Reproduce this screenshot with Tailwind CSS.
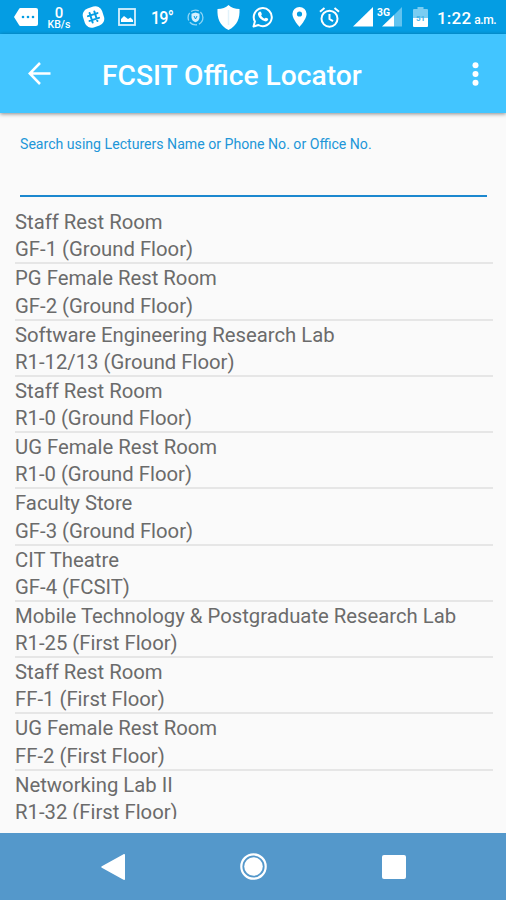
<!DOCTYPE html>
<html lang="en">
<head>
    <meta charset="UTF-8">
    <title>FCSIT Office Locator</title>
    <meta name="viewport" content="width=device-width, initial-scale=1.0">
    <script src="https://cdn.jsdelivr.net/npm/@tailwindcss/browser@4"></script>
</head>
<body class="h-[900px] w-[506px] overflow-hidden flex flex-col bg-[#fafafa] font-[Roboto,sans-serif]">

<!-- Status bar -->
<div class="h-[34px] shrink-0 bg-[#049de3] flex items-center pl-[14px] text-white">
    <!-- Message tag -->
    <svg class="w-6 h-[18px] shrink-0" viewBox="0 0 24 18" fill="currentColor">
        <path d="M7 0h15a2 2 0 0 1 2 2v14a2 2 0 0 1-2 2H7c-1 0-1.600-.4-2-1L0 9l5-8c.4-.6 1-1 2-1z"/>
        <g fill="#049de3"><circle cx="9" cy="9" r="1.300"/><circle cx="14" cy="9" r="1.300"/><circle cx="19" cy="9" r="1.300"/></g>
    </svg>
    <div class="ml-[8px] mt-[2px] w-[26px] shrink-0 flex flex-col items-center font-medium">
        <span class="text-[15px] leading-[13px]">0</span>
        <span class="text-[10.500px] leading-[10px]">KB/s</span>
    </div>
    <!-- Slack -->
    <svg class="ml-[10px] w-[23px] h-[22px] shrink-0" viewBox="0 0 23 22">
        <rect x="1.500" y="1" width="20" height="20" rx="7" fill="#fff" transform="rotate(-18 11.500 11)"/>
        <g stroke="#049de3" stroke-width="2" stroke-linecap="round" transform="rotate(-18 11.500 11)">
            <path d="M9 6v10M14 6v10M6.500 8.500h10M6.500 13.500h10"/>
        </g>
    </svg>
    <!-- Picture -->
    <svg class="ml-[13px] w-[18px] h-[18px] shrink-0" viewBox="0 0 18 18">
        <rect x="1" y="1" width="16" height="16" fill="none" stroke="#d5f0fd" stroke-width="1.800"/>
        <path d="M3 14v-3l3-3 4 3 2.500-1.500L15 12v2z" fill="#fff"/>
    </svg>
    <span class="ml-[15px] mt-px w-[22px] shrink-0 text-[19px] leading-5 font-medium tracking-[-1px] origin-left scale-x-[0.85]">19°</span>
    <!-- Small round shield -->
    <svg class="ml-[14px] mt-px w-[17px] h-[17px] shrink-0" viewBox="0 0 17 17" fill="none">
        <circle cx="8.500" cy="8.500" r="7.400" stroke="#8fd5f5" stroke-width="1.300" stroke-dasharray="8 2"/>
        <path d="M8.500 3.500l4 1.300v3.500c0 2.500-1.700 4.200-4 5-2.300-.8-4-2.500-4-5V4.800z" fill="#d5f0fd"/>
        <path d="M7 7l1.500 3L10 7" stroke="#049de3"/>
    </svg>
    <!-- Shield -->
    <svg class="ml-[13px] w-[23px] h-[25px] shrink-0" viewBox="0 0 23 25">
        <path d="M11.500 0C14 2.500 18 4 22.500 4c.5 9-2 16.500-11 21C2.500 20.500 0 13 .5 4 5 4 9 2.500 11.500 0z" fill="#fff"/>
        <path d="M11.500 5v15" stroke="#e2f2fa" stroke-width="1.500"/>
    </svg>
    <!-- WhatsApp -->
    <svg class="ml-[12px] w-[22px] h-[22px] shrink-0" viewBox="0 0 22 22" fill="none">
        <path d="M1.500 20.500l1.400-5A9 9 0 1 1 6.400 19z" stroke="#fff" stroke-width="2" stroke-linejoin="round"/>
        <path d="M7.500 5.800c.5-.4 1.200-.3 1.500.3l.8 1.800c.2.500-.8 1.300-.6 1.700.7 1.300 1.700 2.300 3.100 2.900.5.200 1.100-1.100 1.700-.8l1.800.9c.5.300.5.900.2 1.400-.6 1.100-1.700 1.600-3 1.300-3.600-.9-6.100-3.400-7-6.500-.3-1.200.4-2.300 1.500-3z" fill="#fff"/>
    </svg>
    <!-- Location pin -->
    <svg class="ml-[18px] w-[15px] h-5 shrink-0" viewBox="0 0 15 20">
        <path fill="#fff" fill-rule="evenodd" d="M7.500 0A7.100 7.100 0 0 0 .4 7.100C.4 12.300 7.500 20 7.500 20s7.100-7.700 7.100-12.900A7.100 7.100 0 0 0 7.500 0zm0 9.600a2.600 2.600 0 1 1 0-5.200 2.600 2.600 0 0 1 0 5.200z"/>
    </svg>
    <!-- Alarm -->
    <svg class="ml-[12px] w-[21px] h-[21px] shrink-0" viewBox="0 0 21 21" fill="none" stroke="#fff" stroke-width="2">
        <circle cx="10.500" cy="11.700" r="8"/>
        <path d="M10.500 7v5l3.500 2.200M1 4.700L5.500 1M20 4.700L15.500 1"/>
    </svg>
    <!-- Signal strength -->
    <svg class="ml-[13px] w-[50px] h-5 shrink-0" viewBox="0 0 50 20">
        <path d="M0 19.500L20 0v19.500z" fill="#fff"/>
        <path d="M41 8l8-8v19.500h-8z" fill="#62c3ef"/>
        <path d="M29 19.500L41 8v11.500z" fill="#fff"/>
        <text x="24" y="8.500" font-size="10" font-weight="700" fill="#fff" textLength="13" lengthAdjust="spacingAndGlyphs">3G</text>
    </svg>
    <!-- Battery -->
    <svg class="ml-[10px] w-[15px] h-5 shrink-0" viewBox="0 0 15 20">
        <path d="M4.500 0h6v2H14a1 1 0 0 1 1 1v8H0V3a1 1 0 0 1 1-1h3.500z" fill="#7acdf2"/>
        <path d="M0 11h15v8a1 1 0 0 1-1 1H1a1 1 0 0 1-1-1z" fill="#fff"/>
        <text x="3" y="13.500" font-size="8" font-weight="700" fill="#3fb1e6">51</text>
    </svg>
    <div class="ml-[9px] mt-[2px] flex items-baseline whitespace-nowrap font-medium">
        <span class="text-[17px] leading-5 tracking-[0.2px]">1:22</span>
        <span class="ml-[3px] text-[12px] tracking-[-0.4px]">a.m.</span>
    </div>
</div>

<!-- App bar -->
<div class="relative z-10 h-[79px] shrink-0 bg-[#42c5ff] shadow-[0_1px_4px_rgba(0,0,0,0.45)] flex items-center pl-[28px] pr-[27px] text-white">
    <svg class="w-[23px] h-[23px] shrink-0" viewBox="0 0 23 23" fill="none" stroke="currentColor" stroke-width="2.500">
        <path d="M22.500 11.500H2M12 1L1.700 11.500 12 22"/>
    </svg>
    <h1 class="ml-[51px] mt-[4px] text-[28.200px] leading-8 font-medium whitespace-nowrap">FCSIT Office Locator</h1>
    <svg class="ml-auto w-[7px] h-6 shrink-0" viewBox="0 0 7 24" fill="currentColor">
        <circle cx="3.500" cy="3.200" r="3"/><circle cx="3.500" cy="12" r="3"/><circle cx="3.500" cy="20.800" r="3"/>
    </svg>
</div>

<!-- Search field -->
<div class="h-[84px] shrink-0 mx-5 pt-[22px] w-[467px] border-b-2 border-[#1c88cf]">
    <label class="block text-[14.120px] leading-[18px] text-[#2196d8] whitespace-nowrap">Search using Lecturers Name or Phone No. or Office No.</label>
</div>

<!-- Office list -->
<div id="officeList" class="h-[611px] shrink-0 mt-[11px] ml-[15px] w-[478px] overflow-hidden text-[20.300px] leading-[27.300px] text-[#6b6b6b]"></div>
<div class="h-[14px] shrink-0"></div>

<!-- Navigation bar -->
<div class="h-[67px] shrink-0 bg-[#5498cb] flex items-center pl-[101px] text-white">
    <svg class="w-6 h-[26px]" viewBox="0 0 24 26" fill="currentColor">
        <path d="M22.500.2c.7-.4 1.500.1 1.500.9v23.800c0 .8-.8 1.300-1.500.9L.8 13.800a.9.900 0 0 1 0-1.600z"/>
    </svg>
    <svg class="ml-[115px] w-[27px] h-[27px]" viewBox="0 0 27 27">
        <circle cx="13.500" cy="13.500" r="12.200" fill="none" stroke="currentColor" stroke-width="2.200"/>
        <circle cx="13.500" cy="13.500" r="9.300" fill="currentColor"/>
    </svg>
    <div class="ml-[115px] w-6 h-6 rounded-[2px] bg-white"></div>
</div>
<div class="h-px shrink-0 bg-[#5498cb]"></div>

<script>
    const offices = [
        ["Staff Rest Room", "GF-1 (Ground Floor)"],
        ["PG Female Rest Room", "GF-2 (Ground Floor)"],
        ["Software Engineering Research Lab", "R1-12/13 (Ground Floor)"],
        ["Staff Rest Room", "R1-0 (Ground Floor)"],
        ["UG Female Rest Room", "R1-0 (Ground Floor)"],
        ["Faculty Store", "GF-3 (Ground Floor)"],
        ["CIT Theatre", "GF-4 (FCSIT)"],
        ["Mobile Technology & Postgraduate Research Lab", "R1-25 (First Floor)"],
        ["Staff Rest Room", "FF-1 (First Floor)"],
        ["UG Female Rest Room", "FF-2 (First Floor)"],
        ["Networking Lab II", "R1-32 (First Floor)"]
    ];

    const officeList = document.getElementById("officeList");

    offices.forEach(([name, room]) => {
        const row = document.createElement("div");
        row.className = "h-[56.250px] pt-px border-b-2 border-[#e6e6e6] whitespace-nowrap";
        row.innerHTML = `<p></p><p></p>`;
        row.children[0].textContent = name;
        row.children[1].textContent = room;
        officeList.appendChild(row);
    });
</script>

</body>
</html>
